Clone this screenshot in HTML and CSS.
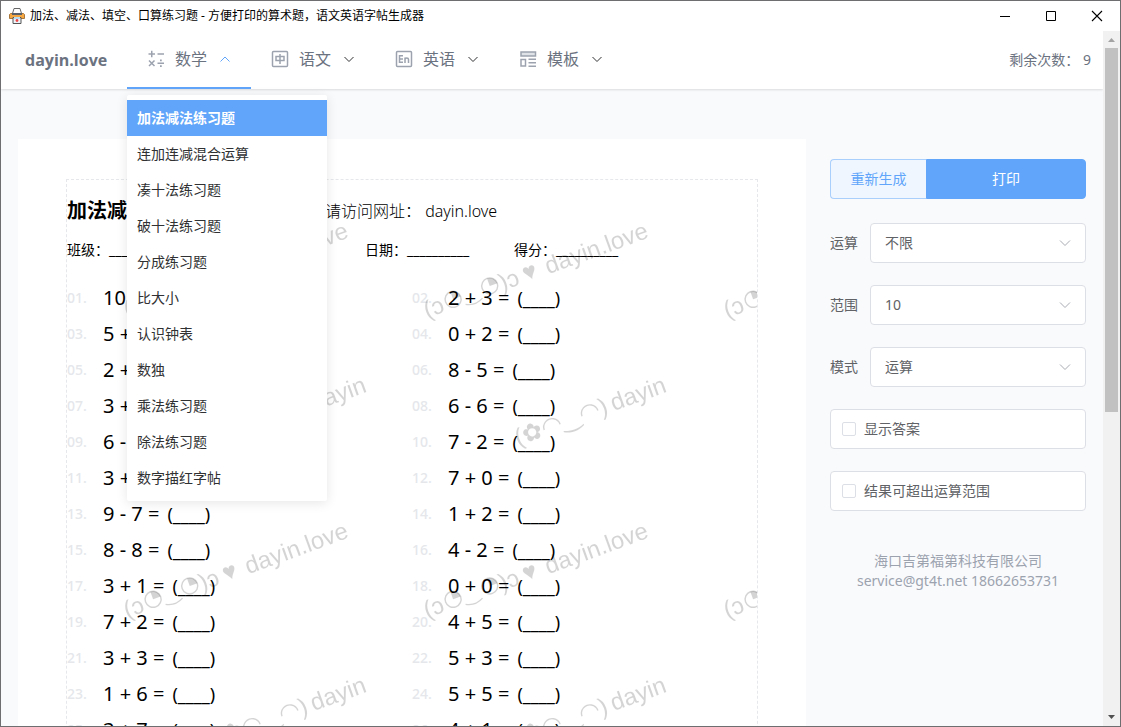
FILE: index.html
```html
<!DOCTYPE html>
<html lang="zh-CN">
<head>
<meta charset="utf-8">
<title>加法、减法、填空、口算练习题</title>
<link rel="stylesheet" href="styles.css">
</head>
<body>
<div class="window">
  <div class="titlebar">
    <svg class="app-icon" viewBox="0 0 16 16" width="16" height="16">
      <path d="M5 .5h6l1.500 5h-9z" fill="#fff" stroke="#666"/>
      <path d="M1.500 5.500h13l1 1v4h-15v-4z" fill="#f5a742" stroke="#a8763a"/>
      <path d="M3 5h10v2H3z" fill="#5a5f68"/>
      <path d="M4 9.500h8v6H4z" fill="#eef5fa" stroke="#555"/>
      <path d="M5 9h6v2H5z" fill="#b9dcee"/>
      <circle cx="8" cy="12.500" r="1.400" fill="#ef4444"/>
    </svg>
    <span class="window-title">加法、减法、填空、口算练习题 - 方便打印的算术题，语文英语字帖生成器</span>
    <div class="window-controls">
      <button class="window-button" aria-label="最小化"><svg width="12" height="12" viewBox="0 0 12 12"><path d="M1 6.500h10" stroke="#000"/></svg></button>
      <button class="window-button" aria-label="最大化"><svg width="12" height="12" viewBox="0 0 12 12"><path d="M1.500 1.500h9v9h-9z" fill="none" stroke="#000"/></svg></button>
      <button class="window-button" aria-label="关闭"><svg width="12" height="12" viewBox="0 0 12 12"><path d="M1 1l10 10M11 1L1 11" stroke="#000" stroke-width="1.100"/></svg></button>
    </div>
  </div>

  <div class="viewport">
    <div class="app">
      <header class="header">
        <a class="brand" href="#">dayin.love</a>
        <nav class="nav">
          <div class="nav-item nav-item-active">
            <button class="nav-button">
              <svg class="nav-icon" viewBox="0 0 18 18"><path d="M1.500 4h6.500M4.750 .75v6.500M10.500 4H17M2 10.500l5.500 5.500M7.500 10.500L2 16M10.500 13.250H17"/><path class="solid" d="M13 9.500h1.750v1.750H13zM13 15.250h1.750V17H13z"/></svg>
              <span>数学</span>
              <svg class="nav-chevron" viewBox="0 0 12 12"><path d="M1.500 8.500L6 4l4.500 4.500"/></svg>
            </button>
            <div class="menu">
              <a class="menu-item menu-item-active" href="#">加法减法练习题</a>
              <a class="menu-item" href="#">连加连减混合运算</a>
              <a class="menu-item" href="#">凑十法练习题</a>
              <a class="menu-item" href="#">破十法练习题</a>
              <a class="menu-item" href="#">分成练习题</a>
              <a class="menu-item" href="#">比大小</a>
              <a class="menu-item" href="#">认识钟表</a>
              <a class="menu-item" href="#">数独</a>
              <a class="menu-item" href="#">乘法练习题</a>
              <a class="menu-item" href="#">除法练习题</a>
              <a class="menu-item" href="#">数字描红字帖</a>
            </div>
          </div>
          <div class="nav-item">
            <button class="nav-button">
              <svg class="nav-icon" viewBox="0 0 18 18"><rect x="1.500" y="1.500" width="15" height="15" rx="1"/><path d="M5 6.500h8v4H5zM9 4v10"/></svg>
              <span>语文</span>
              <svg class="nav-chevron" viewBox="0 0 12 12"><path d="M1.500 4L6 8.500 10.500 4"/></svg>
            </button>
          </div>
          <div class="nav-item">
            <button class="nav-button">
              <svg class="nav-icon" viewBox="0 0 18 18"><rect x="1.500" y="1.500" width="15" height="15" rx="1"/><path d="M8 5.750H4.500v6.500H8M4.500 9H8M10 13V7.500M10 9.500q0-1.500 1.750-1.500t1.750 1.500V13"/></svg>
              <span>英语</span>
              <svg class="nav-chevron" viewBox="0 0 12 12"><path d="M1.500 4L6 8.500 10.500 4"/></svg>
            </button>
          </div>
          <div class="nav-item">
            <button class="nav-button">
              <svg class="nav-icon" viewBox="0 0 18 18"><path class="tint" d="M2 2h14.500v4H2z"/><path d="M2 9.500h4.500v6.500H2zM9.500 9.250h7.500M9.500 12.750h7.500M9.500 16.250h7.500"/></svg>
              <span>模板</span>
              <svg class="nav-chevron" viewBox="0 0 12 12"><path d="M1.500 4L6 8.500 10.500 4"/></svg>
            </button>
          </div>
        </nav>
        <span class="quota">剩余次数： 9</span>
      </header>

      <main class="content">
        <section class="paper">
          <div class="sheet">
            <svg class="watermark" width="100%" height="100%">
              <defs>
                <pattern id="mark" width="300" height="300" patternUnits="userSpaceOnUse">
                  <g transform="translate(61 138) rotate(-20)">
                    <text x="-1" y="0">(ɔ</text>
                    <circle class="face-line" cx="30" cy="-9" r="8"/>
                    <path d="M30-9v-8a8 8 0 0 1 8 8z"/>
                    <path class="face-line" d="M40 0q9 5 18 0"/>
                    <circle class="face-line" cx="69" cy="-9" r="8"/>
                    <path d="M69-9v-8a8 8 0 0 1 8 8z"/>
                    <text x="79" y="0">)ɔ</text>
                    <text x="104" y="-1">♥</text>
                    <text x="128" y="0">dayin.love</text>
                  </g>
                  <g transform="translate(151 266) rotate(-20)">
                    <text x="0" y="0">(✿◠‿◠)</text>
                    <text x="102" y="0">dayin</text>
                  </g>
                </pattern>
              </defs>
              <rect width="100%" height="100%" fill="url(#mark)"/>
            </svg>
            <div class="sheet-head">
              <h1 class="sheet-title">加法减法练习题</h1>
              <span class="sheet-note">请访问网址： dayin.love</span>
            </div>
            <div class="fields">
              <span>班级：__________</span>
              <span>姓名：_________</span>
              <span>日期：__________</span>
              <span>得分：__________</span>
            </div>
            <ol class="problems">
              <li><span class="no">01.</span>10 - 4 =<span class="blank">(____)</span></li>
              <li><span class="no">02.</span>2 + 3 =<span class="blank">(____)</span></li>
              <li><span class="no">03.</span>5 + 1 =<span class="blank">(____)</span></li>
              <li><span class="no">04.</span>0 + 2 =<span class="blank">(____)</span></li>
              <li><span class="no">05.</span>2 + 6 =<span class="blank">(____)</span></li>
              <li><span class="no">06.</span>8 - 5 =<span class="blank">(____)</span></li>
              <li><span class="no">07.</span>3 + 4 =<span class="blank">(____)</span></li>
              <li><span class="no">08.</span>6 - 6 =<span class="blank">(____)</span></li>
              <li><span class="no">09.</span>6 - 2 =<span class="blank">(____)</span></li>
              <li><span class="no">10.</span>7 - 2 =<span class="blank">(____)</span></li>
              <li><span class="no">11.</span>3 + 5 =<span class="blank">(____)</span></li>
              <li><span class="no">12.</span>7 + 0 =<span class="blank">(____)</span></li>
              <li><span class="no">13.</span>9 - 7 =<span class="blank">(____)</span></li>
              <li><span class="no">14.</span>1 + 2 =<span class="blank">(____)</span></li>
              <li><span class="no">15.</span>8 - 8 =<span class="blank">(____)</span></li>
              <li><span class="no">16.</span>4 - 2 =<span class="blank">(____)</span></li>
              <li><span class="no">17.</span>3 + 1 =<span class="blank">(____)</span></li>
              <li><span class="no">18.</span>0 + 0 =<span class="blank">(____)</span></li>
              <li><span class="no">19.</span>7 + 2 =<span class="blank">(____)</span></li>
              <li><span class="no">20.</span>4 + 5 =<span class="blank">(____)</span></li>
              <li><span class="no">21.</span>3 + 3 =<span class="blank">(____)</span></li>
              <li><span class="no">22.</span>5 + 3 =<span class="blank">(____)</span></li>
              <li><span class="no">23.</span>1 + 6 =<span class="blank">(____)</span></li>
              <li><span class="no">24.</span>5 + 5 =<span class="blank">(____)</span></li>
              <li><span class="no">25.</span>3 + 7 =<span class="blank">(____)</span></li>
              <li><span class="no">26.</span>4 + 1 =<span class="blank">(____)</span></li>
            </ol>
          </div>
        </section>

        <aside class="sidebar">
          <div class="actions">
            <button class="button button-plain">重新生成</button>
            <button class="button button-primary">打印</button>
          </div>
          <form class="options">
            <div class="option">
              <label for="operation">运算</label>
              <div class="select-wrap">
                <select id="operation"><option>不限</option></select>
                <svg class="select-chevron" viewBox="0 0 12 12"><path d="M1 3.500l5 5 5-5"/></svg>
              </div>
            </div>
            <div class="option">
              <label for="range">范围</label>
              <div class="select-wrap">
                <select id="range"><option>10</option></select>
                <svg class="select-chevron" viewBox="0 0 12 12"><path d="M1 3.500l5 5 5-5"/></svg>
              </div>
            </div>
            <div class="option">
              <label for="mode">模式</label>
              <div class="select-wrap">
                <select id="mode"><option>运算</option></select>
                <svg class="select-chevron" viewBox="0 0 12 12"><path d="M1 3.500l5 5 5-5"/></svg>
              </div>
            </div>
            <label class="check"><input type="checkbox">显示答案</label>
            <label class="check"><input type="checkbox">结果可超出运算范围</label>
          </form>
          <footer class="contact">
            <div>海口吉第福第科技有限公司</div>
            <div>service@gt4t.net 18662653731</div>
          </footer>
        </aside>
      </main>
    </div>

    <div class="scrollbar">
      <svg class="scroll-arrow" viewBox="0 0 17 17"><path d="M5 11l3.500-4L12 11z" fill="#a3a3a3"/></svg>
      <div class="scroll-track"><div class="scroll-thumb"></div></div>
      <svg class="scroll-arrow" viewBox="0 0 17 17"><path d="M5 6l3.500 4L12 6z" fill="#505050"/></svg>
    </div>
  </div>
</div>
</body>
</html>
```
FILE: styles.css
```css
* {
  box-sizing: border-box;
}

body {
  margin: 0;
  font-family: "Noto Sans", "Noto Sans CJK SC", sans-serif;
  font-size: 14px;
  line-height: 20px;
  color: #606266;
}

button,
select {
  font: inherit;
  color: inherit;
}

a {
  color: inherit;
  text-decoration: none;
}

.window {
  display: flex;
  flex-direction: column;
  height: 100vh;
  overflow: hidden;
  border: 1px solid #6e6e70;
  background: #fff;
}

.titlebar {
  display: flex;
  flex: none;
  align-items: center;
  height: 30px;
  padding-left: 8px;
  gap: 5px;
  font-size: 12px;
  color: #000;
}

.window-title {
  flex: 1;
  white-space: nowrap;
}

.window-controls {
  display: flex;
}

.window-button {
  display: grid;
  place-items: center;
  width: 46px;
  height: 30px;
  padding: 0;
  border: 0;
  background: none;
}

.viewport {
  display: flex;
  flex: 1;
  min-height: 0;
}

.app {
  display: flex;
  flex: 1;
  flex-direction: column;
  min-width: 0;
  overflow: hidden;
  background: #f9fafc;
}

.header {
  display: flex;
  flex: none;
  align-items: center;
  height: 58px;
  padding: 0 12px 0 24px;
  background: #fff;
  box-shadow: 0 1px 2px rgba(0, 0, 0, 0.12);
  position: relative;
  z-index: 2;
  color: #6b7280;
}

.brand {
  width: 102px;
  font-family: "Open Sans", sans-serif;
  font-size: 16px;
  font-weight: 700;
}

.nav {
  display: flex;
  flex: 1;
  height: 100%;
}

.nav-item {
  position: relative;
  border-bottom: 2px solid transparent;
}

.nav-item-active {
  border-bottom-color: #60a5fa;
}

.nav-button {
  display: flex;
  align-items: center;
  height: 100%;
  padding: 0 20px;
  border: 0;
  background: none;
  font-size: 16px;
}

.nav-icon {
  width: 18px;
  height: 18px;
  margin-right: 10px;
  fill: none;
  stroke: #9ca3af;
  stroke-width: 1.5;
}

.nav-icon .solid {
  fill: #9ca3af;
  stroke: none;
}

.nav-icon .tint {
  fill: #dfe2e7;
}

.nav-chevron {
  width: 12px;
  height: 12px;
  margin-left: 12px;
  fill: none;
  stroke: #303133;
}

.nav-item-active .nav-chevron {
  stroke: #60a5fa;
}

.menu {
  position: absolute;
  top: 64px;
  left: 0;
  width: 200px;
  padding: 5px 0;
  border-radius: 2px;
  background: #fff;
  box-shadow: 0 2px 12px rgba(0, 0, 0, 0.1);
}

.menu-item {
  display: block;
  padding: 0 10px;
  line-height: 36px;
  color: #303133;
}

.menu-item-active {
  background: #60a5fa;
  color: #fff;
  font-weight: 700;
}

.content {
  display: flex;
  align-items: flex-start;
  gap: 24px;
  padding: 50px 17px 0;
}

.paper {
  flex: 1;
  min-width: 0;
  padding: 40px 48px;
  background: #fff;
}

.sheet {
  position: relative;
  border: 1px dashed #e5e7eb;
  color: #000;
}

.watermark {
  position: absolute;
  inset: 0;
  font-family: "Liberation Sans", "DejaVu Sans", sans-serif;
  font-size: 24px;
  fill: rgba(0, 0, 0, 0.17);
}

.face-line {
  fill: none;
  stroke: rgba(0, 0, 0, 0.17);
  stroke-width: 1.4;
}

.sheet-head {
  display: flex;
  align-items: center;
  padding-top: 16px;
}

.sheet-title {
  width: 258px;
  margin: 0;
  font-size: 20px;
  line-height: 30px;
}

.sheet-note {
  font-size: 16px;
  font-weight: 300;
}

.fields {
  display: grid;
  grid-template-columns: repeat(4, 149px);
  padding-top: 14px;
}

.problems {
  display: grid;
  grid-template-columns: 1fr 1fr;
  margin: 0;
  padding: 20px 0;
  list-style: none;
  font-size: 20px;
  line-height: 36px;
}

.problems li {
  display: flex;
}

.no {
  width: 36px;
  font-size: 14px;
  font-weight: 500;
  color: #e5e7eb;
}

.blank {
  margin-left: 8px;
  font-size: 18px;
}

.sidebar {
  width: 256px;
  padding-top: 20px;
}

.actions {
  display: flex;
}

.button {
  height: 40px;
  padding: 0;
  border: 1px solid #60a5fa;
}

.button-plain {
  width: 96px;
  border-color: #a9cffc;
  border-right: 0;
  border-radius: 4px 0 0 4px;
  background: #eff6ff;
  color: #60a5fa;
}

.button-primary {
  flex: 1;
  border-radius: 0 4px 4px 0;
  background: #60a5fa;
  color: #fff;
}

.options {
  display: grid;
  gap: 22px;
  padding-top: 24px;
}

.option {
  display: flex;
  align-items: center;
  gap: 12px;
}

.select-wrap {
  position: relative;
  flex: 1;
}

.select-wrap select {
  display: block;
  width: 100%;
  height: 40px;
  padding: 0 14px;
  border: 1px solid #dcdfe6;
  border-radius: 4px;
  background: #fff;
  appearance: none;
}

.select-chevron {
  position: absolute;
  top: 14px;
  right: 15px;
  width: 12px;
  height: 12px;
  fill: none;
  stroke: #a8abb2;
  pointer-events: none;
}

.check {
  display: flex;
  align-items: center;
  gap: 8px;
  height: 40px;
  padding: 0 11px;
  border: 1px solid #dcdfe6;
  border-radius: 4px;
  background: #fff;
}

.check input {
  width: 14px;
  height: 14px;
  margin: 0;
  border: 1px solid #dcdfe6;
  border-radius: 2px;
  background: #fff;
  appearance: none;
}

.contact {
  padding-top: 40px;
  text-align: center;
  color: #9ca3af;
}

.scrollbar {
  display: flex;
  flex: none;
  flex-direction: column;
  width: 17px;
  background: #f1f1f1;
}

.scroll-arrow {
  flex: none;
  width: 17px;
  height: 17px;
}

.scroll-track {
  flex: 1;
  padding: 0 2px;
}

.scroll-thumb {
  height: 55%;
  background: #c1c1c1;
}
```
